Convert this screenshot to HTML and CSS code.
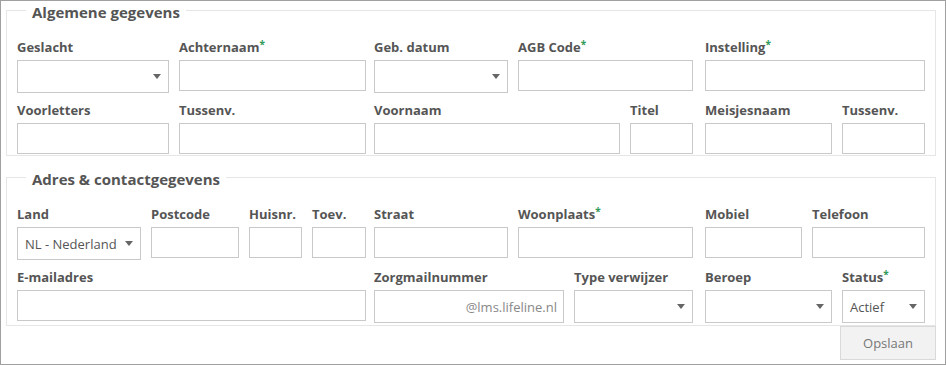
FILE: index.html
```html
<!DOCTYPE html>
<html lang="nl">
<head>
    <meta charset="UTF-8">
    <title>Verwijzer</title>
    <link rel="stylesheet" href="styles.css">
</head>
<body>
    <div class="panel">
        <fieldset class="section">
            <legend>Algemene gegevens</legend>
            <div class="row">
                <div class="group group-a">
                    <div class="field w-152"><label>Geslacht</label><div class="select"><span></span></div></div>
                    <div class="field w-187"><label>Achternaam<span class="req">*</span></label><input type="text"></div>
                </div>
                <div class="group group-b">
                    <div class="field w-134"><label>Geb. datum</label><div class="select"><span></span></div></div>
                    <div class="field w-175"><label>AGB Code<span class="req">*</span></label><input type="text"></div>
                </div>
                <div class="group group-c">
                    <div class="field w-220"><label>Instelling<span class="req">*</span></label><input type="text"></div>
                </div>
            </div>
            <div class="row">
                <div class="group group-a">
                    <div class="field w-152"><label>Voorletters</label><input type="text"></div>
                    <div class="field w-187"><label>Tussenv.</label><input type="text"></div>
                </div>
                <div class="group group-b">
                    <div class="field w-246"><label>Voornaam</label><input type="text"></div>
                    <div class="field w-63"><label>Titel</label><input type="text"></div>
                </div>
                <div class="group group-c">
                    <div class="field w-127"><label>Meisjesnaam</label><input type="text"></div>
                    <div class="field w-83"><label>Tussenv.</label><input type="text"></div>
                </div>
            </div>
        </fieldset>

        <fieldset class="section second">
            <legend>Adres &amp; contactgegevens</legend>
            <div class="row">
                <div class="group group-a">
                    <div class="field w-124"><label>Land</label><div class="select"><span>NL - Nederland</span></div></div>
                    <div class="field w-88"><label>Postcode</label><input type="text"></div>
                    <div class="field w-53"><label>Huisnr.</label><input type="text"></div>
                    <div class="field w-54"><label>Toev.</label><input type="text"></div>
                </div>
                <div class="group group-b">
                    <div class="field w-134"><label>Straat</label><input type="text"></div>
                    <div class="field w-175"><label>Woonplaats<span class="req">*</span></label><input type="text"></div>
                </div>
                <div class="group group-c">
                    <div class="field w-97"><label>Mobiel</label><input type="text"></div>
                    <div class="field w-113"><label>Telefoon</label><input type="text"></div>
                </div>
            </div>
            <div class="row">
                <div class="group group-a">
                    <div class="field w-349"><label>E-mailadres</label><input type="text"></div>
                </div>
                <div class="group group-b">
                    <div class="field w-190"><label>Zorgmailnummer</label>
                        <div class="addon-input"><input type="text"><span class="addon">@lms.lifeline.nl</span></div>
                    </div>
                    <div class="field w-119"><label>Type verwijzer</label><div class="select"><span></span></div></div>
                </div>
                <div class="group group-c">
                    <div class="field w-127"><label>Beroep</label><div class="select"><span></span></div></div>
                    <div class="field w-83"><label>Status<span class="req">*</span></label><div class="select"><span>Actief</span></div></div>
                </div>
            </div>
        </fieldset>

        <div class="actions">
            <button type="button" class="btn">Opslaan</button>
        </div>
    </div>
</body>
</html>
```

FILE: styles.css
```css
body {
    margin: 0;
    font-family: 'Open Sans', 'Noto Sans', Arial, sans-serif;
    color: #555;
    background: #fff;
}
.panel {
    width: 946px;
    height: 365px;
    box-sizing: border-box;
    border: 1px solid #a0a0a0;
    padding: 0 9px 0 5px;
}
.section {
    margin: 1px 0 0 0;
    border: 1px solid #e6e6e6;
    padding: 20px 10px 1px 10px;
    min-width: 0;
}
.section.second {
    margin-top: 13px;
    padding-bottom: 2px;
}
.section legend {
    margin-left: 9px;
    padding: 4px 6px 0 6px;
    font-size: 15px;
    font-weight: bold;
    line-height: 12px;
    color: #555;
}
.row {
    display: flex;
    align-items: flex-start;
}
.row + .row {
    margin-top: 8px;
}
.group {
    display: flex;
    gap: 10px;
    flex-shrink: 0;
}
.group-a {
    width: 349px;
    margin-right: 8px;
}
.group-b {
    width: 319px;
    margin-right: 12px;
}
.group-c {
    width: 220px;
}
.field {
    display: flex;
    flex-direction: column;
    flex-shrink: 0;
}
.field label {
    font-size: 13px;
    font-weight: bold;
    line-height: 18px;
    margin-bottom: 4px;
    white-space: nowrap;
}
.req {
    color: #2f9a5a;
    font-size: 10px;
    vertical-align: top;
    line-height: 12px;
}
.field input[type="text"] {
    box-sizing: border-box;
    width: 100%;
    height: 31px;
    margin: 0;
    border: 1px solid #c9c9c9;
    padding: 0 7px;
    font-family: inherit;
    font-size: 13px;
    color: #555;
    background: #fff;
    outline: none;
}
.select {
    box-sizing: border-box;
    height: 33px;
    border: 1px solid #c9c9c9;
    padding: 0 7px 0 7px;
    display: flex;
    align-items: center;
    justify-content: space-between;
    font-size: 13px;
    color: #555;
    white-space: nowrap;
}
.select::after {
    content: '';
    border-left: 4.5px solid transparent;
    border-right: 4.5px solid transparent;
    border-top: 5px solid #666;
    margin-left: 4px;
    flex-shrink: 0;
}
.addon-input {
    box-sizing: border-box;
    height: 33px;
    border: 1px solid #c9c9c9;
    display: flex;
    align-items: center;
}
.field .addon-input input[type="text"] {
    border: none;
    height: 31px;
    flex: 1;
    min-width: 0;
}
.addon {
    font-size: 13px;
    color: #888;
    padding-right: 6px;
    white-space: nowrap;
}
.w-349 { width: 349px; }
.w-246 { width: 246px; }
.w-220 { width: 220px; }
.w-190 { width: 190px; }
.w-187 { width: 187px; }
.w-175 { width: 175px; }
.w-152 { width: 152px; }
.w-134 { width: 134px; }
.w-127 { width: 127px; }
.w-124 { width: 124px; }
.w-119 { width: 119px; }
.w-113 { width: 113px; }
.w-97 { width: 97px; }
.w-88 { width: 88px; }
.w-83 { width: 83px; }
.w-63 { width: 63px; }
.w-54 { width: 54px; }
.w-53 { width: 53px; }
.actions {
    display: flex;
    justify-content: flex-end;
}
.btn {
    width: 96px;
    height: 34px;
    margin: 0;
    border: 1px solid #d9d9d9;
    background: #f2f2f2;
    color: #777;
    font-family: inherit;
    font-size: 13px;
    padding: 0;
}
```
